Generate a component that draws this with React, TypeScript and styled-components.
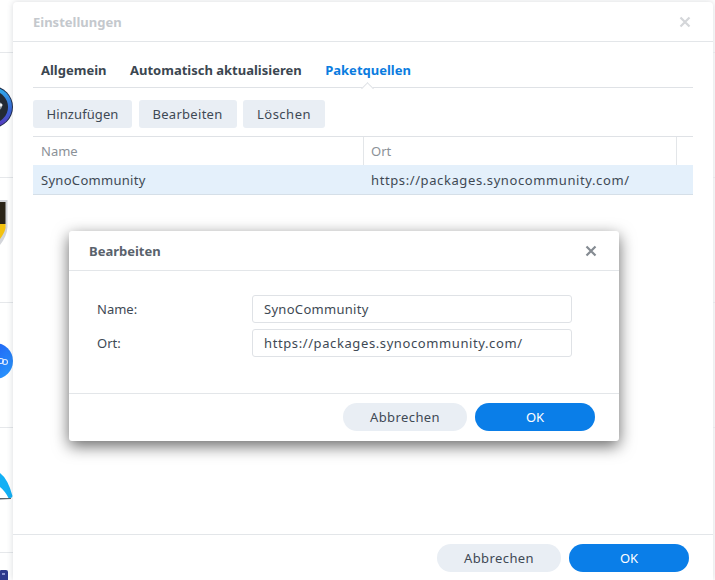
import React from "react"
import styled, { createGlobalStyle } from "styled-components"

const GlobalStyle = createGlobalStyle`
  html, body {
    margin: 0;
    padding: 0;
    background: #ffffff;
    font-family: "Noto Sans", "DejaVu Sans", sans-serif;
  }
`
const Desktop = styled.div`
  position: relative;
  width: 715px;
  height: 580px;
  overflow: hidden;
  display: flex;
  background: #ffffff;
`
const AppStrip = styled.div`
  width: 13px;
  flex: none;
  padding-top: 52px;
  display: flex;
  flex-direction: column;
`
const AppRow = styled.div`
  height: 125px;
  flex: none;
  box-sizing: border-box;
  border-top: 1px solid #e6e8eb;
  overflow: hidden;
`
const AppIcon = styled.svg<{ $top: number }>`
  display: block;
  margin-top: ${(p) => p.$top}px;
`
const Window = styled.div`
  width: 700px;
  flex: none;
  height: 578px;
  margin-top: 2px;
  border-radius: 4px 4px 0 0;
  background: #ffffff;
  box-shadow: 0 0 6px rgba(60, 70, 80, 0.2);
  display: flex;
  flex-direction: column;
`
const RightStrip = styled.div`
  flex: 1;
  padding-top: 52px;
  display: flex;
  flex-direction: column;
`
const RightRow = styled.div`
  height: 125px;
  flex: none;
  box-sizing: border-box;
  border-top: 1px solid #e6e8eb;
`
const TitleBar = styled.div`
  height: 40px;
  flex: none;
  box-sizing: border-box;
  border-bottom: 1px solid #e3e6e9;
  padding: 0 22px 0 20px;
  display: flex;
  align-items: center;
  justify-content: space-between;
`
const WindowTitle = styled.div`
  font-size: 13px;
  font-weight: 700;
  color: #c4c8cd;
`
const CloseIcon = styled.svg`
  display: block;
  flex: none;
`
const WindowBody = styled.div`
  flex: 1;
  padding: 0 20px;
  display: flex;
  flex-direction: column;
`
const Tabs = styled.div`
  height: 46px;
  flex: none;
  box-sizing: border-box;
  border-bottom: 1px solid #dfe2e6;
  display: flex;
  align-items: center;
  gap: 23.500px;
  padding: 11px 8px 0;
  position: relative;
`
const Tab = styled.div<{ $active?: boolean }>`
  font-size: 13px;
  font-weight: 700;
  color: ${(p) => (p.$active ? "#0a7ce0" : "#3b4650")};
`
const TabNotch = styled.span`
  position: absolute;
  left: 330px;
  bottom: -1px;
  width: 9px;
  height: 9px;
  box-sizing: border-box;
  background: #ffffff;
  border-left: 1px solid #dfe2e6;
  border-top: 1px solid #dfe2e6;
  transform: translateY(5px) rotate(45deg);
`
const Toolbar = styled.div`
  display: flex;
  gap: 6.500px;
  padding-top: 12px;
  height: 48px;
  flex: none;
  box-sizing: border-box;
`
const ToolButton = styled.div<{ $width: number }>`
  width: ${(p) => p.$width}px;
  height: 28px;
  border-radius: 3px;
  background: #e9eef4;
  color: #3e4954;
  font-size: 13px;
  display: flex;
  align-items: center;
  justify-content: center;
`
const Table = styled.div`
  border-top: 1px solid #dfe2e6;
  display: flex;
  flex-direction: column;
`
const HeaderRow = styled.div`
  height: 28px;
  display: grid;
  grid-template-columns: 330px 313px 17px;
`
const BodyRow = styled.div`
  height: 30px;
  box-sizing: border-box;
  display: grid;
  grid-template-columns: 330px 313px 17px;
  background: #e4f0fb;
  border-bottom: 1px solid #d5dfe8;
`
const HeaderCell = styled.div`
  font-size: 13px;
  color: #8b9198;
  padding-left: 8px;
  display: flex;
  align-items: center;
  & + & {
    border-left: 1px solid #e3e6e9;
    padding-left: 7px;
  }
`
const BodyCell = styled.div`
  font-size: 13px;
  color: #3e4954;
  padding-left: 8px;
  display: flex;
  align-items: center;
`
const Tracked = styled.span<{ $track: number }>`
  letter-spacing: ${(p) => p.$track}px;
`
const Footer = styled.div`
  box-sizing: border-box;
  border-top: 1px solid #e3e6e9;
  display: flex;
  justify-content: flex-end;
  gap: 8px;
  flex: none;
  padding-right: 24px;
`
const WindowFooter = styled(Footer)`
  height: 46px;
  padding-top: 9px;
`
const PillButton = styled.div<{ $primary?: boolean }>`
  width: ${(p) => (p.$primary ? 120 : 124)}px;
  height: 28px;
  border-radius: 14px;
  background: ${(p) => (p.$primary ? "#0a7ee8" : "#e9eef4")};
  color: ${(p) => (p.$primary ? "#ffffff" : "#3e4954")};
  font-size: 13px;
  display: flex;
  align-items: center;
  justify-content: center;
`
const Dialog = styled.div`
  position: absolute;
  left: 69px;
  top: 231px;
  width: 550px;
  height: 210px;
  border-radius: 3px;
  background: #ffffff;
  box-shadow: 0 5px 16px rgba(0, 0, 0, 0.6);
  display: flex;
  flex-direction: column;
`
const DialogHeader = styled.div`
  height: 40px;
  flex: none;
  box-sizing: border-box;
  border-bottom: 1px solid #e3e6e9;
  padding: 0 22px 0 20px;
  display: flex;
  align-items: center;
  justify-content: space-between;
`
const DialogTitle = styled.div`
  font-size: 13px;
  font-weight: 700;
  color: #59626c;
`
const DialogForm = styled.div`
  flex: 1;
  padding: 24px 47px 0 28px;
  display: flex;
  flex-direction: column;
  gap: 6px;
`
const FormRow = styled.div`
  display: grid;
  grid-template-columns: 155px 320px;
  align-items: center;
`
const FormLabel = styled.div`
  font-size: 13px;
  color: #3e4954;
`
const FormInput = styled.div`
  height: 28px;
  box-sizing: border-box;
  border: 1px solid #dfe2e6;
  border-radius: 3px;
  padding-left: 11px;
  font-size: 13px;
  color: #3e4954;
  display: flex;
  align-items: center;
`
const DialogFooter = styled(Footer)`
  height: 48px;
  padding-top: 9px;
`

const Close = ({ color }: { color: string }) => (
  <CloseIcon width="12" height="12" viewBox="0 0 12 12">
    <path d="M1.5 1.5 L10.500 10.500 M10.500 1.5 L1.5 10.500" stroke={color} strokeWidth="2.2" />
  </CloseIcon>
)

const CameraIcon = () => (
  <AppIcon $top={33} width="13" height="42" viewBox="0 0 13 42">
    <defs>
      <linearGradient id="cam" x1="0" y1="0" x2="0" y2="1">
        <stop offset="0" stopColor="#2fb0ec" />
        <stop offset="0.6" stopColor="#3a62d8" />
        <stop offset="1" stopColor="#5a36b8" />
      </linearGradient>
    </defs>
    <circle cx="-8" cy="21" r="21" fill="#1d2a4a" />
    <circle cx="-8" cy="21" r="20" fill="url(#cam)" />
    <circle cx="-8" cy="21" r="16" fill="#232a35" />
    <circle cx="-2" cy="20" r="4" fill="#8d96a0" />
    <circle cx="1" cy="19" r="1.5" fill="#f2f4f6" />
  </AppIcon>
)

const ShieldIcon = () => (
  <AppIcon $top={22} width="13" height="48" viewBox="0 0 13 48">
    <path d="M0 0 H7.500 V27 Q7 36 0 45 Z" fill="#d3d5da" />
    <path d="M0 2 H5.500 V24 H0 Z" fill="#2a2418" />
    <path d="M0 24 H5.500 V28 Q4.500 33 0 39 Z" fill="#f3c20f" />
  </AppIcon>
)

const PackageIcon = () => (
  <AppIcon $top={39} width="13" height="38" viewBox="0 0 13 38">
    <defs>
      <linearGradient id="pkg" x1="0" y1="0" x2="1" y2="1">
        <stop offset="0" stopColor="#1d50f0" />
        <stop offset="1" stopColor="#2a9cff" />
      </linearGradient>
    </defs>
    <circle cx="-5" cy="19" r="18" fill="url(#pkg)" />
    <circle cx="1" cy="19" r="2.500" fill="none" stroke="#dfeaff" strokeWidth="1.1" />
    <circle cx="5" cy="20" r="2.500" fill="none" stroke="#dfeaff" strokeWidth="1.1" />
  </AppIcon>
)

const GaugeIcon = () => (
  <AppIcon $top={45} width="13" height="28" viewBox="0 0 13 28">
    <path d="M0 0 Q8 6 12.500 23 Q12.500 25 10 25 L8.500 25 Q5 18 0 14 Z" fill="#12b0f5" />
    <path d="M0 25 H11 V26 L0 26.500 Z" fill="#5a636c" />
  </AppIcon>
)

const DockIcon = () => (
  <AppIcon $top={17} width="13" height="10" viewBox="0 0 13 10">
    <path d="M0 1 Q0 0 1 0 H6 Q8 0 8 2 V10 H0 Z" fill="#2f3a8c" />
    <path d="M2 3 H5 V5 H2 Z" fill="#8e96d0" />
  </AppIcon>
)

export default function App() {
  return (
    <Desktop>
      <GlobalStyle />
      <AppStrip>
        <AppRow><CameraIcon /></AppRow>
        <AppRow><ShieldIcon /></AppRow>
        <AppRow><PackageIcon /></AppRow>
        <AppRow><GaugeIcon /></AppRow>
        <AppRow><DockIcon /></AppRow>
      </AppStrip>
      <Window>
        <TitleBar>
          <WindowTitle>Einstellungen</WindowTitle>
          <Close color="#d4d6d9" />
        </TitleBar>
        <WindowBody>
          <Tabs>
            <Tab>Allgemein</Tab>
            <Tab>Automatisch aktualisieren</Tab>
            <Tab $active>Paketquellen</Tab>
            <TabNotch />
          </Tabs>
          <Toolbar>
            <ToolButton $width={99}><Tracked $track={0.1}>Hinzufügen</Tracked></ToolButton>
            <ToolButton $width={98}><Tracked $track={0.3}>Bearbeiten</Tracked></ToolButton>
            <ToolButton $width={82}><Tracked $track={0.5}>Löschen</Tracked></ToolButton>
          </Toolbar>
          <Table>
            <HeaderRow>
              <HeaderCell>Name</HeaderCell>
              <HeaderCell>Ort</HeaderCell>
              <HeaderCell />
            </HeaderRow>
            <BodyRow>
              <BodyCell><Tracked $track={0.3}>SynoCommunity</Tracked></BodyCell>
              <BodyCell><Tracked $track={0.6}>https://packages.synocommunity.com/</Tracked></BodyCell>
              <BodyCell />
            </BodyRow>
          </Table>
        </WindowBody>
        <WindowFooter>
          <PillButton><Tracked $track={0.4}>Abbrechen</Tracked></PillButton>
          <PillButton $primary>OK</PillButton>
        </WindowFooter>
      </Window>
      <RightStrip>
        <RightRow />
        <RightRow />
        <RightRow />
        <RightRow />
      </RightStrip>
      <Dialog>
        <DialogHeader>
          <DialogTitle>Bearbeiten</DialogTitle>
          <Close color="#858b92" />
        </DialogHeader>
        <DialogForm>
          <FormRow>
            <FormLabel>Name:</FormLabel>
            <FormInput><Tracked $track={0.3}>SynoCommunity</Tracked></FormInput>
          </FormRow>
          <FormRow>
            <FormLabel>Ort:</FormLabel>
            <FormInput><Tracked $track={0.6}>https://packages.synocommunity.com/</Tracked></FormInput>
          </FormRow>
        </DialogForm>
        <DialogFooter>
          <PillButton><Tracked $track={0.4}>Abbrechen</Tracked></PillButton>
          <PillButton $primary>OK</PillButton>
        </DialogFooter>
      </Dialog>
    </Desktop>
  )
}
